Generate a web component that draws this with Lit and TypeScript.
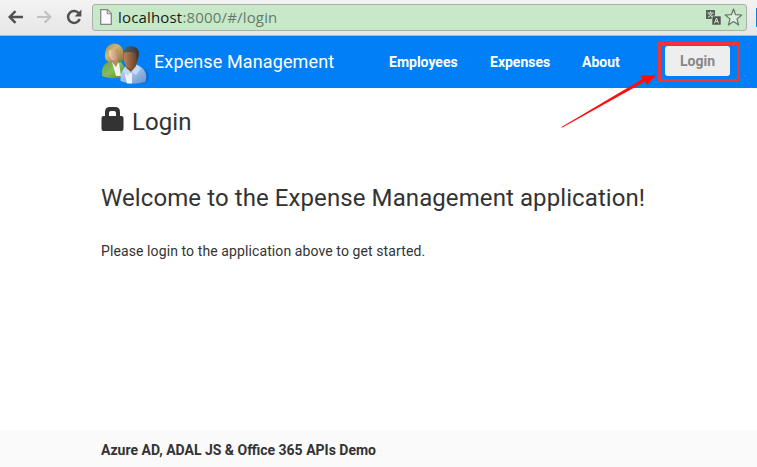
import { LitElement, html, css, svg } from "lit";
import { customElement } from "lit/decorators.js";

@customElement("browser-bar")
class BrowserBar extends LitElement {
  static styles = css`
    :host { display: flex; align-items: center; height: 36px; box-sizing: border-box; padding: 0 0 1px 8px;
      background: linear-gradient(#f3f3f3, #e6e6e6); border-bottom: 1px solid #b9b9b9; overflow: hidden; }
    svg { display: block; flex: none; }
    .back { margin-right: 13px; }
    .forward { margin-right: 13px; }
    .reload { margin-right: 10px; }
    .address { display: flex; align-items: center; width: 655px; height: 27px; flex: none; box-sizing: border-box;
      padding: 0 3px 0 7px; border: 1px solid #a9b0a9; border-radius: 3px; background: #c8e8ca; }
    .url { flex: 1; margin-left: 6px; font: 15px/24px "Open Sans", "Noto Sans", sans-serif; color: #667c68; white-space: nowrap; letter-spacing: 0.17px; }
    .host { color: #151d16; }
    .translate { margin-right: 3px; }
    .extension { width: 10px; height: 19px; margin-left: 9px; background: #0a80d8; }
  `;
  render() {
    return html`
      <svg class="back" width="16" height="16" viewBox="0 0 16 16"><path d="M15 8H2M7.5 2.2L1.7 8l5.8 5.8" fill="none" stroke="#505050" stroke-width="2.4"/></svg>
      <svg class="forward" width="16" height="16" viewBox="0 0 16 16"><path d="M0 8h13M7.5 2.2L13.3 8l-5.8 5.8" fill="none" stroke="#c2c2c2" stroke-width="2.2"/></svg>
      <svg class="reload" width="16" height="16" viewBox="0 0 16 16"><path d="M13 4.5A6 6 0 1 0 13.7 10" fill="none" stroke="#505050" stroke-width="2.5"/><path d="M15.4 .5v7H8.6z" fill="#505050"/></svg>
      <div class="address">
        <svg width="12" height="16" viewBox="0 0 12 16"><path d="M.7.7h6.8l3.8 3.8v10.8H.7z" fill="#fafafa" stroke="#858585" stroke-width="1.3"/><path d="M7.2 1v3.8h3.8" fill="#ddd" stroke="#858585"/></svg>
        <span class="url"><span class="host">localhost</span>:8000/#/login</span>
        <svg class="translate" width="15" height="15" viewBox="0 0 15 15">
          <rect width="9" height="9" fill="#595f59"/><rect x="6" y="6" width="9" height="9" fill="#4d534e" stroke="#c8e8ca" stroke-width=".6"/>
          <path d="M1.5 3h6M4.5 1.3V3M2.8 3.2Q4 6 7 7.3M6.2 3.2Q5 6 2 7.3" fill="none" stroke="#dceede" stroke-width=".9"/>
          <path d="M8.5 13.3l2-5.2 2 5.2M9.2 11.6h2.7" fill="none" stroke="#dceede"/>
        </svg>
        <svg width="19" height="18" viewBox="0 0 19 18"><path d="M9.5 1l2.1 5.7 6.2.3-4.8 3.9 1.6 6-5.1-3.3-5.1 3.3 1.6-6L1.2 7l6.2-.3z" fill="#dcf0dd" stroke="#687069" stroke-width="1.2" stroke-linejoin="round"/></svg>
      </div>
      <div class="extension"></div>`;
  }
}

@customElement("people-logo")
class PeopleLogo extends LitElement {
  static styles = css`:host, svg { display: block; }`;
  render() {
    return html`<svg width="48" height="46" viewBox="0 -1 48 46">
      <defs>
        <linearGradient id="blonde" x2="1" y2="1"><stop stop-color="#94884d"/><stop offset=".4" stop-color="#cdb772"/><stop offset="1" stop-color="#8f7036"/></linearGradient>
        <linearGradient id="green" x2="1" y2="1"><stop stop-color="#6b9f49"/><stop offset=".5" stop-color="#86bb5f"/><stop offset="1" stop-color="#4d8826"/></linearGradient>
        <linearGradient id="skin" x2="1"><stop stop-color="#edceb0"/><stop offset="1" stop-color="#bd885c"/></linearGradient>
        <linearGradient id="brown" x2="1"><stop stop-color="#b9855a"/><stop offset=".5" stop-color="#8e5f3e"/><stop offset="1" stop-color="#5f3b22"/></linearGradient>
        <linearGradient id="blue" x2="1" y2="1"><stop stop-color="#bcd4f2"/><stop offset=".5" stop-color="#9ebde5"/><stop offset="1" stop-color="#6690cb"/></linearGradient>
        <linearGradient id="dark" x2="1"><stop stop-color="#5c6062"/><stop offset="1" stop-color="#34383a"/></linearGradient>
        <filter id="soft"><feGaussianBlur stdDeviation="1"/></filter>
      </defs>
      ${svg`
      <path d="M25 41Q37 46 47 40Q48 33 44 30L30 30Z" fill="#064a96" opacity=".55" filter="url(#soft)"/>
      <path d="M1 36Q0 28 4 24L9 21L20 22L24 28V37Q10 40 1 36Z" fill="url(#green)"/>
      <path d="M11 22l7 1 2 13h-5Z" fill="#f0f3ee"/>
      <path d="M5 20Q3 17 4.5 11Q6 4 13 3.5Q20 3.5 22 10L22 20Q19 23 16 20L8 22Z" fill="url(#blonde)"/>
      <path d="M11 17h6v6l-2 4-4-5Z" fill="#b98a60"/>
      <path d="M8 10Q12 10 17 8.5Q19 15 16 19Q13 22 10 19Q7 15 8 10Z" fill="url(#skin)"/>
      <path d="M19.5 41Q19 32 24 27L34 24Q43 27 45 34Q46 40 44 42Q31 46 19.5 41Z" fill="url(#blue)"/>
      <path d="M24 28l10-1-3 6v10.5h-5L24 35Z" fill="#eef4fc"/>
      <path d="M26 22h9v6l-5 5-5-4Z" fill="#80512f"/>
      <path d="M23 12Q29 9 37 13V19Q36 26 31 28Q26 30 24 24Q22 19 23 12Z" fill="url(#brown)"/>
      <path d="M22.5 13Q23 6.5 30 6.3Q38 6.3 38 14Q38 18 36 20L34.5 13Q28 11 22.5 13Z" fill="url(#dark)"/>
      <path d="M24 27l6 5-3 4-5-4ZM36 25l-6 7 5 3 5-7Z" fill="#c3daf5"/>`}
    </svg>`;
  }
}

@customElement("app-root")
class AppRoot extends LitElement {
  static styles = css`
    :host { display: flex; flex-direction: column; position: relative; height: 467px; overflow: hidden; background: #fff; color: #333; font-family: Roboto, sans-serif; }
    .nav { display: flex; align-items: center; height: 52px; flex: none; box-sizing: border-box; padding-left: 101px; background: #007ff7; color: #fff; white-space: nowrap; }
    .brand { width: 235px; margin-left: 5px; font-size: 18px; line-height: 24px; letter-spacing: 0.12px; }
    .link { font-size: 14px; font-weight: 700; width: 101px; }
    .link.second { width: 92px; }
    .link.third { width: 83px; }
    .button { display: flex; align-items: center; justify-content: center; width: 65px; height: 30px; border: 0; border-radius: 3px; padding: 0; margin-bottom: 2px; background: #eee; color: #888; font: 700 14px Roboto, sans-serif; }
    .content { flex: 1; padding-left: 101px; white-space: nowrap; }
    .title { display: flex; align-items: center; gap: 8px; height: 30px; margin: 19px 0 0; font-size: 24px; line-height: 30px; font-weight: 400; letter-spacing: 0.09px; }
    .lock { margin-bottom: 5px; }
    .welcome { margin: 46px 0 0; font-size: 24px; line-height: 30px; font-weight: 400; letter-spacing: 0.09px; }
    .message { margin: 28px 0 0; font-size: 14px; line-height: 20px; letter-spacing: 0.1px; }
    .footer { height: 37px; flex: none; box-sizing: border-box; padding: 10px 0 0 101px; background: #fafafa; font-size: 14px; line-height: 20px; font-weight: 700; }
    .annotation { position: absolute; left: 0; top: 0; pointer-events: none; }
  `;
  render() {
    return html`
      <browser-bar></browser-bar>
      <nav class="nav">
        <people-logo></people-logo><span class="brand">Expense Management</span>
        <span class="link">Employees</span><span class="link second">Expenses</span><span class="link third">About</span>
        <button class="button">Login</button>
      </nav>
      <main class="content">
        <h1 class="title"><svg class="lock" width="23" height="25" viewBox="0 0 23 25"><path d="M4 9V5Q4 0 9 0h5q5 0 5 5v4h1.5q2 0 2 2v11q0 2-2 2h-18q-2 0-2-2V11q0-2 2-2zM8 9h7V6q0-2-2-2h-3Q8 4 8 6z" fill="#333" fill-rule="evenodd"/></svg><span>Login</span></h1>
        <h2 class="welcome">Welcome to the Expense Management application!</h2>
        <p class="message">Please login to the application above to get started.</p>
      </main>
      <footer class="footer">Azure AD, ADAL JS &amp; Office 365 APIs Demo</footer>
      <svg class="annotation" width="757" height="140" viewBox="0 0 757 140"><rect x="659.5" y="43.5" width="79" height="37" fill="none" stroke="#f43338" stroke-width="3"/><path d="M561.5 127L642.5 79l-2.5-3.5 16-.2-8.7 9.7-2.6-3.3L562 127.8z" fill="#ff0d0d"/></svg>`;
  }
}
